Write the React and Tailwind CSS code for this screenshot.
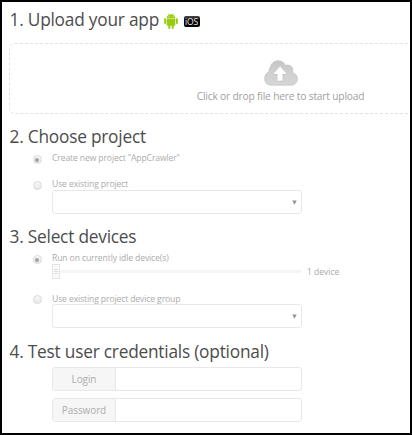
function Heading({ children }) {
  return (
    <h2 className="ml-[7.500px] flex h-[24px] items-center whitespace-nowrap pt-[2px] text-[17.300px] leading-[24px] tracking-[-0.220px] text-[#4c4c4c]">
      {children}
    </h2>
  );
}

function AndroidIcon() {
  return (
    <svg className="ml-[4.500px] mt-[2px] h-[16px] w-[14px] shrink-0" viewBox="0 0 14 16" fill="#99cc11">
      <path d="M2.700 5C2.800 3.400 3.700 2.300 4.900 1.700L4.200.5l.4-.2.7 1.200a5 5 0 0 1 3.400 0L9.400.3l.4.2-.7 1.200c1.200.6 2.100 1.700 2.200 3.300z" />
      <path d="M2.700 5.500h8.600v6.300a.9.9 0 0 1-.9.9h-.7v2.200a1 1 0 0 1-2 0v-2.200H6.300v2.200a1 1 0 0 1-2 0v-2.200h-.7a.9.9 0 0 1-.9-.9z" />
      <rect x="0.100" y="5.300" width="2" height="5.600" rx="1" />
      <rect x="11.900" y="5.300" width="2" height="5.600" rx="1" />
      <circle cx="5" cy="3.300" r="0.500" fill="#fff" />
      <circle cx="9" cy="3.300" r="0.500" fill="#fff" />
    </svg>
  );
}

function IosBadge() {
  return (
    <span className="ml-[6px] mt-[2px] flex h-[11px] w-[16px] items-center justify-center rounded-[2px] bg-linear-to-b from-[#4a4a4a] to-black to-60% text-[8.500px] leading-[11px] tracking-[-0.100px] text-[#e8e8e8]">
      iOS
    </span>
  );
}

function CloudIcon() {
  return (
    <svg className="ml-[2px] h-[26px] w-[34px]" viewBox="0 0 34 26">
      <defs>
        <linearGradient id="cloud" x1="0" y1="0" x2="0" y2="1">
          <stop offset="0" stopColor="#c6c6c6" />
          <stop offset="0.500" stopColor="#d0d0d0" />
          <stop offset="1" stopColor="#d6d6d6" />
        </linearGradient>
      </defs>
      <path
        d="M7 25.200C3.200 25.200.6 22.300.6 18.700c0-3.400 1.700-5.800 4.400-7.200C4.700 9.400 5.500 8.300 6.300 7.500 7 3.500 10 .7 14.200.7c3.400 0 6 1.800 7.300 4.700 3.700-1.200 7 .8 7.400 4.100.1 1.200-.1 2.200-.5 3 3 .9 5 3.200 5 6.200 0 3.700-2.700 6.500-6.500 6.500z"
        fill="url(#cloud)"
        stroke="#bebebe"
        strokeWidth="0.600"
      />
      <path d="M16.500 7.400l6.700 7.300h-3.900v6.800h-5v-6.800h-4z" fill="#b5b5b5" opacity="0.600" />
      <path d="M16 6.600l6.600 7.300h-4v6.800h-5v-6.800H9.400z" fill="#fff" />
    </svg>
  );
}

function Radio({ checked }) {
  return (
    <span className="mt-[3px] flex h-[9px] w-[9px] shrink-0 items-center justify-center rounded-full border border-[#d9d9d9] bg-linear-to-b from-[#f8f8f8] to-[#e9e9e9]">
      {checked && <span className="h-[4px] w-[4px] rounded-full bg-[#a2a2a2]" />}
    </span>
  );
}

function Option({ checked, children }) {
  return (
    <div className="ml-[30.500px] flex h-[12px] gap-[10.500px] whitespace-nowrap text-[8.600px] leading-[12px] tracking-[-0.120px] text-[#ababab]">
      <Radio checked={checked} />
      <span>{children}</span>
    </div>
  );
}

function Select() {
  return (
    <div className="ml-[50px] flex h-[24px] w-[250px] items-center justify-end rounded-[3px] border border-[#e8e8e8] pr-[4px]">
      <svg className="h-[5px] w-[5px]" viewBox="0 0 5 5">
        <path d="M.3.500h4.400L2.500 4.800z" fill="#929292" />
      </svg>
    </div>
  );
}

function Field({ label }) {
  return (
    <div className="ml-[50px] flex h-[24px] w-[250px] rounded-[3px] border border-[#e8e8e8]">
      <span className="flex w-[63px] items-center justify-center border-r border-[#e8e8e8] bg-[#f6f6f6] text-[10px] leading-[22px] tracking-[-0.100px] text-[#adadad]">
        {label}
      </span>
    </div>
  );
}

export default function App() {
  return (
    <div className="h-[435px] w-[412px] overflow-hidden border-2 border-black bg-white font-['Open_Sans','Noto_Sans',sans-serif]">
      <div className="pt-[5px]">
        <Heading>
          1. Upload your app
          <AndroidIcon />
          <IosBadge />
        </Heading>
      </div>

      <div className="ml-[7px] mt-[12px] flex h-[71px] w-[542px] flex-col items-center rounded-[6px] border border-dashed border-[#e2e2e2] pt-[16px]">
        <CloudIcon />
        <span className="ml-px mt-[2px] whitespace-nowrap text-[10.200px] leading-[16px] tracking-[-0.170px] text-[#a0a0a0]">
          Click or drop file here to start upload
        </span>
      </div>

      <div className="mt-[10px]">
        <Heading>2. Choose project</Heading>
      </div>
      <div className="mt-[4px]">
        <Option checked>Create new project "AppCrawler"</Option>
      </div>
      <div className="mt-[14px]">
        <Option>Use existing project</Option>
        <Select />
      </div>

      <div className="mt-[10px]">
        <Heading>3. Select devices</Heading>
      </div>
      <div className="mt-[4px]">
        <Option checked>Run on currently idle device(s)</Option>
        <div className="ml-[50px] flex h-[15px] items-center">
          <span className="flex h-[15px] w-[8px] flex-col items-center justify-center gap-[1px] border border-[#e4e4e4] bg-[#fafafa]">
            <span className="h-px w-[4px] bg-[#dedede]" />
            <span className="h-px w-[4px] bg-[#dedede]" />
            <span className="h-px w-[4px] bg-[#dedede]" />
          </span>
          <span className="h-[3px] w-[241px] bg-[#f5f5f5]" />
          <span className="ml-[6px] whitespace-nowrap text-[8.500px] leading-[12px] text-[#a9a9a9]">1 device</span>
        </div>
      </div>
      <div className="mt-[13px]">
        <Option>
          <span className="block pt-px">Use existing project device group</span>
        </Option>
        <Select />
      </div>

      <div className="mt-[11px]">
        <Heading>4. Test user credentials (optional)</Heading>
      </div>
      <div className="mt-[4px] flex flex-col gap-[7px]">
        <Field label="Login" />
        <Field label="Password" />
      </div>
    </div>
  );
}
